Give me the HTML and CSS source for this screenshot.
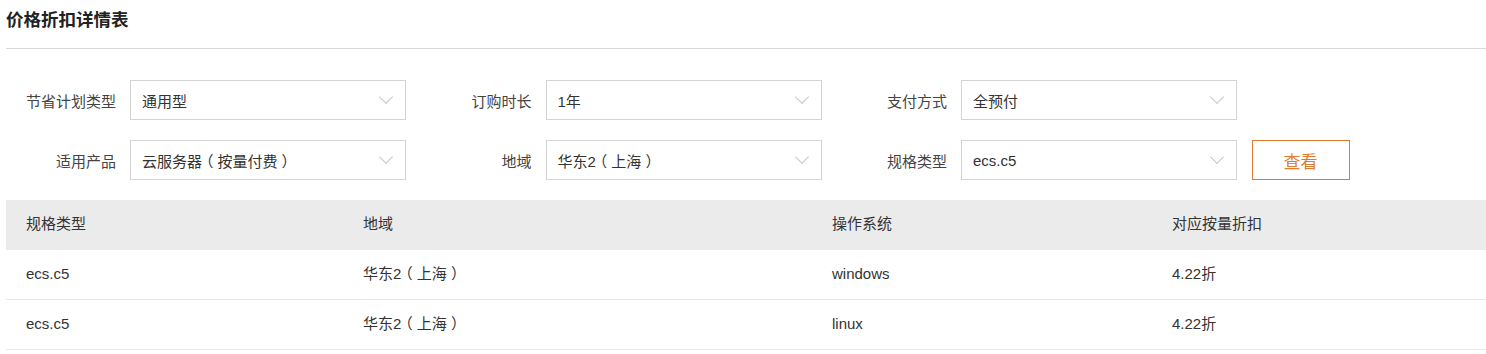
FILE: index.html
```html
<!DOCTYPE html>
<html lang="zh-CN">
<head>
    <meta charset="UTF-8">
    <meta name="viewport" content="width=device-width, initial-scale=1.0">
    <title>价格折扣详情表</title>
    <link rel="stylesheet" href="styles.css">
</head>
<body>
    <div class="page">
        <h2 class="page-title">价格折扣详情表</h2>

        <div class="filters">
            <div class="filter-row">
                <div class="field">
                    <label>节省计划类型</label>
                    <div class="select"><span>通用型</span><i class="arrow"></i></div>
                </div>
                <div class="field">
                    <label>订购时长</label>
                    <div class="select"><span>1年</span><i class="arrow"></i></div>
                </div>
                <div class="field">
                    <label>支付方式</label>
                    <div class="select"><span>全预付</span><i class="arrow"></i></div>
                </div>
            </div>
            <div class="filter-row">
                <div class="field">
                    <label>适用产品</label>
                    <div class="select"><span>云服务器<span class="paren">（</span>按量付费<span class="paren">）</span></span><i class="arrow"></i></div>
                </div>
                <div class="field">
                    <label>地域</label>
                    <div class="select"><span>华东2<span class="paren">（</span>上海<span class="paren">）</span></span><i class="arrow"></i></div>
                </div>
                <div class="field">
                    <label>规格类型</label>
                    <div class="select"><span>ecs.c5</span><i class="arrow"></i></div>
                </div>
                <button class="btn-query">查看</button>
            </div>
        </div>

        <div class="table">
            <div class="table-row table-head">
                <div class="cell">规格类型</div>
                <div class="cell">地域</div>
                <div class="cell">操作系统</div>
                <div class="cell">对应按量折扣</div>
            </div>
            <div class="table-row">
                <div class="cell">ecs.c5</div>
                <div class="cell">华东2<span class="paren">（</span>上海<span class="paren">）</span></div>
                <div class="cell">windows</div>
                <div class="cell">4.22折</div>
            </div>
            <div class="table-row">
                <div class="cell">ecs.c5</div>
                <div class="cell">华东2<span class="paren">（</span>上海<span class="paren">）</span></div>
                <div class="cell">linux</div>
                <div class="cell">4.22折</div>
            </div>
        </div>
    </div>
</body>
</html>
```

FILE: styles.css
```css
body, html {
    margin: 0;
    padding: 0;
    background: #fff;
    color: #333;
    font-family: "Liberation Sans", "Noto Sans CJK SC", sans-serif;
    font-size: 15px;
    text-spacing-trim: space-all;
}

.page {
    padding-left: 6px;
}

.page-title {
    margin: 0;
    padding-top: 8px;
    height: 40px;
    line-height: 24px;
    font-size: 17.5px;
    font-weight: bold;
    color: #222;
    border-bottom: 1px solid #d9d9d9;
}

/* full-width brackets drawn centred in their cell */
.paren {
    font-feature-settings: "halt";
    padding: 0 4px;
}

.filters {
    margin-top: 31px;
    display: flex;
    flex-direction: column;
    gap: 20px;
}

.filter-row {
    display: flex;
    align-items: center;
    gap: 15.5px;
}

.field {
    display: flex;
    align-items: center;
    width: 400px;
}

.field label {
    width: 110px;
    padding-right: 14px;
    text-align: right;
    color: #444;
    white-space: nowrap;
}

.select {
    box-sizing: border-box;
    width: 276px;
    height: 40px;
    border: 1px solid #d4d4d4;
    padding: 0 11px;
    display: flex;
    align-items: center;
    justify-content: space-between;
    color: #333;
}

.arrow {
    width: 9px;
    height: 9px;
    border-right: 1px solid #c8c8c8;
    border-bottom: 1px solid #c8c8c8;
    transform: rotate(45deg);
    margin: -6px 3px 0 0;
}

.btn-query {
    box-sizing: border-box;
    width: 98px;
    height: 40px;
    margin-left: -1px;
    border: 1px solid #e07a2f;
    background: #fff;
    color: #e07a2f;
    font-family: "Noto Sans CJK SC", sans-serif;
    font-size: 17px;
    cursor: pointer;
}

.table {
    margin-top: 20px;
}

.table-row {
    box-sizing: border-box;
    display: grid;
    grid-template-columns: 337px 469px 340px 1fr;
    height: 50px;
    line-height: 20px;
    align-items: center;
    border-bottom: 1px solid #e8e8e8;
}

.table-head {
    background: #ebebeb;
    border-bottom: none;
}

.cell {
    padding-left: 20px;
    padding-bottom: 2px;
    color: #333;
}
```
